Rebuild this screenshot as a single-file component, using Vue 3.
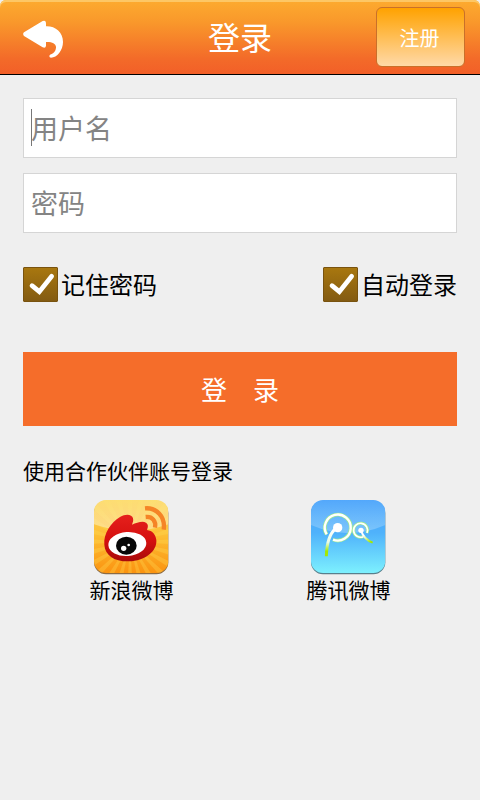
<template>
  <div class="page">
    <header class="bar">
      <div class="bar-inner">
        <button class="back" type="button" aria-label="返回">
          <svg viewBox="69 61 120 114" aria-hidden="true">
            <path
              fill="#fff"
              d="M72 98 L128 64 Q138 60 138 72 V80 C166 79 189 98 189 127 C189 152 171 174 153 174 Q145 172 150 165 C165 160 168 150 168 141 C167 131 155 126 138 127 V138 Q137 147 128 143 L72 109 Q67 103 72 98Z"
            />
          </svg>
        </button>
        <h1>登录</h1>
        <button class="register" type="button">注册</button>
      </div>
    </header>

    <form class="form" @submit.prevent="login">
      <div class="field" :class="{ active: !username }">
        <input v-model="username" type="text" placeholder="用户名" aria-label="用户名" />
      </div>
      <div class="field">
        <input v-model="password" type="password" placeholder="密码" aria-label="密码" />
      </div>

      <div class="options">
        <label v-for="opt in options" :key="opt.id" class="option" :for="opt.id">
          <span class="tick">
            <input :id="opt.id" v-model="opt.checked" type="checkbox" />
            <svg v-if="opt.checked" viewBox="39 36 105 105" aria-hidden="true">
              <path
                d="M66 92 L88 110 L125 64"
                fill="none"
                stroke="#fff"
                stroke-width="14"
                stroke-linecap="round"
              />
            </svg>
          </span>
          <span class="option-text">{{ opt.label }}</span>
        </label>
      </div>

      <button class="submit" type="submit"><span>登</span><span>录</span></button>
    </form>

    <section class="partners">
      <h2>使用合作伙伴账号登录</h2>
      <div class="partner-list">
        <a class="partner" href="#sina">
          <svg viewBox="42 30 225 225" aria-hidden="true">
            <defs>
              <linearGradient id="sinaBg" x1="0" y1="0" x2="0" y2="1">
                <stop offset="0" stop-color="#fdd75a" />
                <stop offset="0.5" stop-color="#fdbd33" />
                <stop offset="1" stop-color="#fb9310" />
              </linearGradient>
              <linearGradient id="sinaGloss" x1="0" y1="0" x2="0" y2="1">
                <stop offset="0" stop-color="#fff" stop-opacity="0.15" />
                <stop offset="1" stop-color="#fff" stop-opacity="0.4" />
              </linearGradient>
              <linearGradient id="sinaRed" x1="0" y1="0" x2="0" y2="1">
                <stop offset="0" stop-color="#e5201c" />
                <stop offset="0.55" stop-color="#d5100f" />
                <stop offset="1" stop-color="#a80b0b" />
              </linearGradient>
              <clipPath id="sinaClip">
                <rect x="42" y="30" width="223" height="219" rx="36" />
              </clipPath>
            </defs>
            <rect x="42" y="33" width="223" height="220" rx="36" fill="#8b6b45" />
            <g clip-path="url(#sinaClip)">
              <rect x="42" y="30" width="223" height="219" fill="url(#sinaBg)" />
              <path v-for="(ray, i) in rays" :key="i" :d="ray" fill="#ffdf55" fill-opacity="0.3" />
              <path d="M42 30 H265 V103 Q154 142 42 103Z" fill="url(#sinaGloss)" />
            </g>
            <path
              d="M73 164 C70 132 93 96 120 81 C138 70 156 73 159 85 C161 93 158 98 156 104 C170 98 188 92 198 98 C206 103 204 112 201 120 C218 122 227 134 229 150 C232 184 194 213 147 214 C103 215 75 196 73 164Z"
              fill="url(#sinaRed)"
            />
            <ellipse cx="142" cy="162" rx="57" ry="36" fill="#fff" transform="rotate(-4 142 162)" />
            <ellipse cx="139" cy="167" rx="31" ry="27" fill="#080808" />
            <circle cx="131" cy="175" r="8" fill="#fff" />
            <circle cx="146" cy="165" r="4" fill="#fff" />
            <g fill="none" stroke="#f58426" stroke-width="13">
              <path d="M195 55 C229 52 257 80 251 119" />
              <path d="M197 81 C217 79 229 93 225 113" />
            </g>
          </svg>
          <span>新浪微博</span>
        </a>
        <a class="partner" href="#tencent">
          <svg viewBox="48 30 225 225" aria-hidden="true">
            <defs>
              <linearGradient id="qqBg" x1="0" y1="0" x2="0" y2="1">
                <stop offset="0" stop-color="#4aa3fb" />
                <stop offset="0.45" stop-color="#4fb2fb" />
                <stop offset="1" stop-color="#7df0fe" />
              </linearGradient>
              <linearGradient id="qqGloss" x1="0" y1="0" x2="0" y2="1">
                <stop offset="0" stop-color="#fff" stop-opacity="0.05" />
                <stop offset="1" stop-color="#fff" stop-opacity="0.26" />
              </linearGradient>
              <linearGradient id="qqStem" gradientUnits="userSpaceOnUse" x1="0" y1="120" x2="0" y2="195">
                <stop offset="0" stop-color="#fff" />
                <stop offset="0.5" stop-color="#e8fbe0" />
                <stop offset="0.85" stop-color="#a4e800" />
              </linearGradient>
              <linearGradient id="qqStemSmall" gradientUnits="userSpaceOnUse" x1="200" y1="122" x2="232" y2="158">
                <stop offset="0.3" stop-color="#fff" />
                <stop offset="0.9" stop-color="#a4e800" />
              </linearGradient>
              <clipPath id="qqClip">
                <rect x="48" y="30" width="223" height="219" rx="36" />
              </clipPath>
            </defs>
            <rect x="48" y="33" width="223" height="220" rx="36" fill="#587f8c" />
            <g clip-path="url(#qqClip)">
              <rect x="48" y="30" width="223" height="219" fill="url(#qqBg)" />
              <path d="M48 30 H271 V105 Q160 153 48 105Z" fill="url(#qqGloss)" />
            </g>
            <g fill="none">
              <g stroke="#a5ec8b">
                <path d="M95 133 A39 39 0 1 1 114 149" stroke-width="11" />
                <path d="M205 140 A21 21 0 1 1 216 129" stroke-width="9" />
              </g>
              <g stroke="#fff">
                <path d="M95 133 A39 39 0 1 1 114 149" stroke-width="7" />
                <path d="M205 140 A21 21 0 1 1 216 129" stroke-width="5" />
              </g>
              <path d="M124 114 C106 128 95 158 94 199" stroke="url(#qqStem)" stroke-width="9" />
              <path d="M198 122 C205 142 216 152 233 158" stroke="url(#qqStemSmall)" stroke-width="6" />
            </g>
            <circle cx="128" cy="113" r="14" fill="#fff" />
            <circle cx="198" cy="121" r="8" fill="#fff" />
          </svg>
          <span>腾讯微博</span>
        </a>
      </div>
    </section>
  </div>
</template>

<script setup>
import { ref } from 'vue'

const username = ref('')
const password = ref('')
const options = ref([
  { id: 'remember', label: '记住密码', checked: true },
  { id: 'auto', label: '自动登录', checked: true },
])

// sun rays behind the eye, as thin wedges from the centre
const rays = Array.from({ length: 24 }, (_, i) => {
  const a = (i * Math.PI) / 12
  const point = (t) => `${Math.round(150 + 190 * Math.cos(t))} ${Math.round(155 + 190 * Math.sin(t))}`
  return `M150 155 L${point(a - 0.06)} L${point(a + 0.06)}Z`
})

const login = () => {
  if (!username.value.trim() || !password.value) return
  console.log('login', username.value)
}
</script>

<style>
body {
  background: #efefef;
}
</style>

<style scoped>
.page {
  min-height: 100vh;
  background: #efefef;
  color: #000;
  font-family: 'Noto Sans CJK SC', sans-serif;
}

button,
input {
  font-family: inherit;
  box-sizing: border-box;
  margin: 0;
}

.bar {
  border-bottom: 1px solid #000;
}

.bar-inner {
  display: grid;
  grid-template-columns: 1fr auto 1fr;
  align-items: center;
  height: 74px;
  box-sizing: border-box;
  padding: 0 15px;
  border-radius: 6px 6px 0 0;
  background: linear-gradient(#fdab2f, #f9982b 30%, #f36a29 80%, #f25f28);
  box-shadow: inset 0 2px 0 #fdc765;
}

.back {
  justify-self: start;
  padding: 4px 8px 0;
  border: none;
  background: transparent;
  cursor: pointer;
}

.back svg {
  display: block;
  width: 40px;
  height: 38px;
}

h1 {
  margin: 0;
  padding-bottom: 2px;
  color: #fff;
  font-size: 32px;
  line-height: 48px;
  font-weight: 400;
}

.register {
  justify-self: end;
  width: 89px;
  height: 60px;
  padding: 0 2px 0 0;
  border: 1px solid #c9702a;
  border-radius: 6px;
  background: linear-gradient(#ffa200, #ffd9a8);
  color: #fff;
  font-size: 20px;
  cursor: pointer;
}

.form {
  display: flex;
  flex-direction: column;
  gap: 15px;
  padding: 23px 23px 0;
}

.field {
  position: relative;
}

.field input {
  display: block;
  width: 100%;
  height: 60px;
  padding: 0 7px 2px;
  border: 1px solid #d5d5d5;
  border-radius: 0;
  background: #fff;
  color: #000;
  font-size: 27px;
  outline: none;
}

.field input::placeholder {
  color: #848484;
  opacity: 1;
}

/* text cursor of the empty user name box */
.field.active::before {
  content: '';
  position: absolute;
  left: 8px;
  top: 11px;
  width: 1px;
  height: 37px;
  background: #777;
}

.options {
  display: flex;
  justify-content: space-between;
  padding: 19px 0 35px;
}

.option {
  display: flex;
  align-items: center;
  gap: 3px;
  font-size: 24px;
  line-height: 33px;
  cursor: pointer;
}

.option-text {
  padding-bottom: 2px;
}

.tick {
  display: grid;
}

.tick > * {
  grid-area: 1 / 1;
  width: 35px;
  height: 35px;
}

.tick input {
  appearance: none;
  border: 1px solid #79530f;
  border-radius: 1px;
  background: linear-gradient(#a8770f, #835b12);
}

.tick svg {
  pointer-events: none;
}

.submit {
  display: flex;
  justify-content: center;
  align-items: center;
  gap: 26px;
  height: 74px;
  padding: 0 0 2px;
  border: none;
  background: #f56d2a;
  color: #fff;
  font-size: 26px;
  cursor: pointer;
}

.partners {
  padding: 30px 23px;
}

h2 {
  margin: 0;
  font-size: 21px;
  line-height: 28px;
  font-weight: 400;
}

.partner-list {
  display: flex;
  padding-top: 16px;
}

.partner {
  flex: 1;
  display: flex;
  flex-direction: column;
  align-items: center;
  color: #000;
  font-size: 21px;
  line-height: 28px;
  text-decoration: none;
}

.partner svg {
  width: 75px;
  height: 75px;
}
</style>
